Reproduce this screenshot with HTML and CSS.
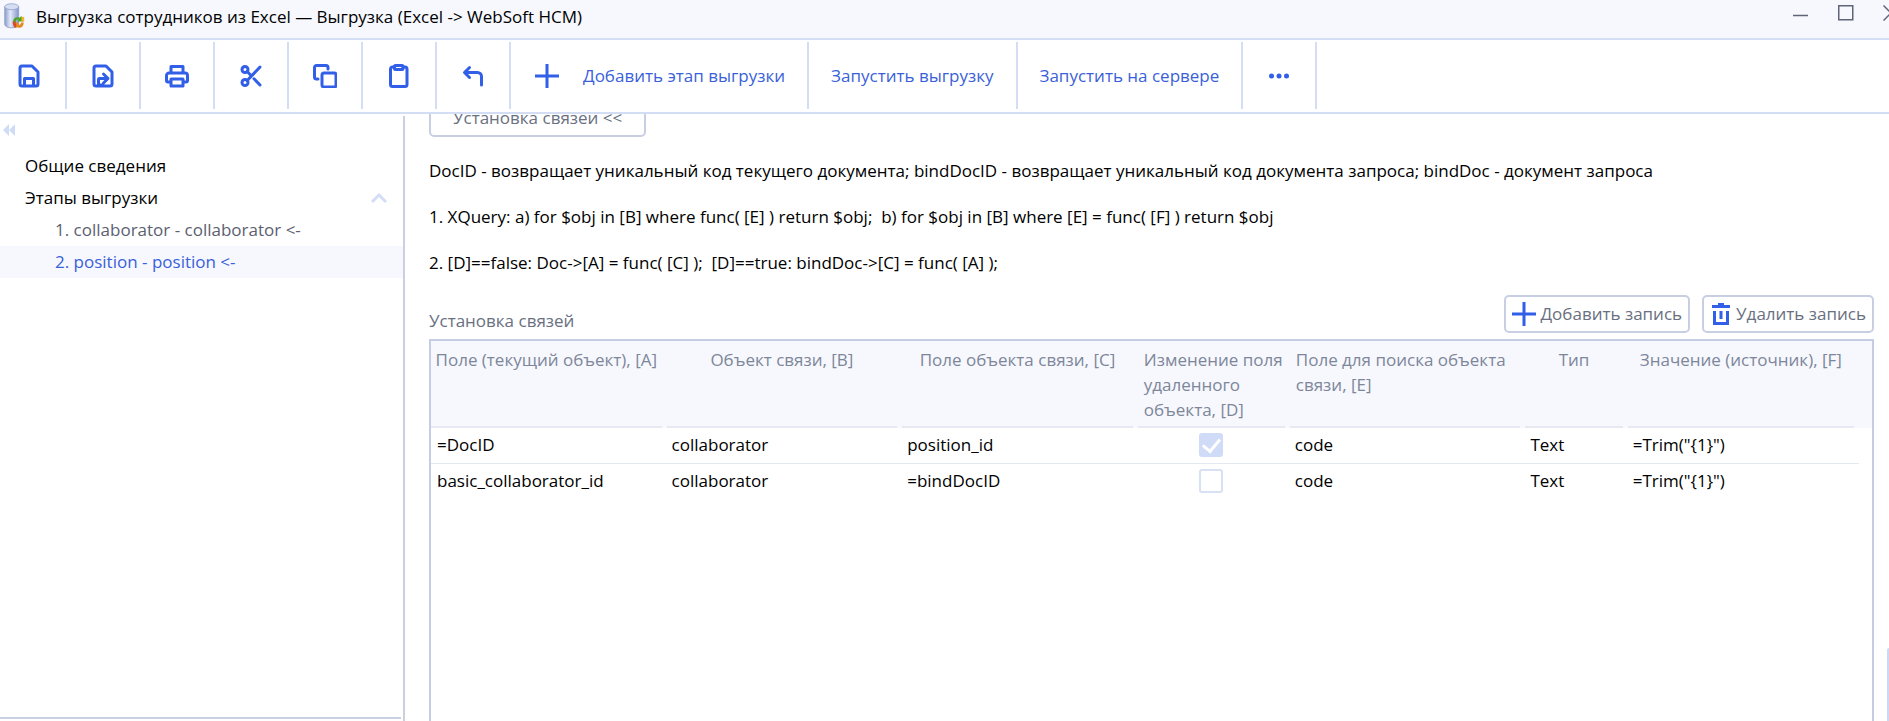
FILE: index.html
```html
<!DOCTYPE html>
<html lang="ru">
<head>
<meta charset="utf-8">
<title>Выгрузка сотрудников из Excel</title>
<link rel="stylesheet" href="styles.css">
</head>
<body>
<header class="titlebar">
  <svg class="app-icon" viewBox="0 0 22 28" aria-hidden="true">
    <defs><linearGradient id="cyl" x1="0" x2="1"><stop offset="0" stop-color="#8b9ccc"/><stop offset=".4" stop-color="#e3e9f8"/><stop offset="1" stop-color="#8495cb"/></linearGradient></defs>
    <path d="M1 4v19c0 5 15 5 15 0V4z" fill="url(#cyl)" stroke="#8997c0" stroke-width=".8"/>
    <ellipse cx="8.500" cy="4" rx="7.500" ry="3.200" fill="#d5def3" stroke="#8c9cc8" stroke-width=".8"/>
    <path d="M10 20c0-4 4-6 7-4l2-2 2 6h-6l1-2c-2-1-3 0-3 3z" fill="#48a51d"/>
    <path d="M21.500 21c0 5-4 7-7 5l-2 1-1-6h5l-1 2c2 1 3 0 3-2z" fill="#e58a22"/>
    <path d="M9.500 20h3l1 4-1 3c-2-1-3-4-3-7z" fill="#d74c26"/>
    <path d="M19 15h3v5h-3z" fill="#f0b52c"/>
  </svg>
  <h1 class="title">Выгрузка сотрудников из Excel — Выгрузка (Excel -&gt; WebSoft HCM)</h1>
  <div class="window-controls">
    <button type="button" class="window-button" aria-label="Свернуть"><svg viewBox="0 0 16 16"><path d="M0 10.500h15"/></svg></button>
    <button type="button" class="window-button" aria-label="Развернуть"><svg viewBox="0 0 16 16"><path d="M.75.750h14v14h-14z"/></svg></button>
    <button type="button" class="window-button" aria-label="Закрыть"><svg viewBox="0 0 16 16"><path d="M.5.500l15 15M15.500.500l-15 15"/></svg></button>
  </div>
</header>

<nav class="toolbar" aria-label="Действия">
  <button type="button" class="tool" aria-label="Сохранить"><svg viewBox="0 0 24 24"><path d="M5 2h10l6 6v12a2 2 0 0 1-2 2H5a2 2 0 0 1-2-2V4a2 2 0 0 1 2-2zM7.500 22v-7.500h9V22"/></svg></button>
  <button type="button" class="tool" aria-label="Сохранить и закрыть"><svg viewBox="0 0 24 24"><path d="M5 2h10l6 6v12a2 2 0 0 1-2 2H5a2 2 0 0 1-2-2V4a2 2 0 0 1 2-2zM7.500 21.500v-6a1 1 0 0 1 1-1H16M12.500 10l4.500 4.500-4.500 4.500M7.500 21h4"/></svg></button>
  <button type="button" class="tool" aria-label="Печать"><svg viewBox="0 0 24 24"><path d="M6 9V2.500h12V9M6 18H3a1.500 1.500 0 0 1-1.500-1.500V11.500A2.500 2.500 0 0 1 4 9h16a2.500 2.500 0 0 1 2.500 2.500v5A1.500 1.500 0 0 1 21 18h-3M6 15h12v7H6z"/></svg></button>
  <button type="button" class="tool" aria-label="Вырезать"><svg viewBox="0 0 24 24"><circle cx="6" cy="5.500" r="3"/><circle cx="6" cy="18.500" r="3"/><path d="M21 3L8.200 16.500M8.200 7.500L12 11.500M15 14.800l6 6.200"/></svg></button>
  <button type="button" class="tool" aria-label="Копировать"><svg viewBox="0 0 24 24"><rect x="9" y="9" width="14" height="14" rx="2"/><path d="M5 15H3.500a2 2 0 0 1-2-2V3.500a2 2 0 0 1 2-2H13a2 2 0 0 1 2 2V5"/></svg></button>
  <button type="button" class="tool" aria-label="Вставить"><svg viewBox="0 0 24 24"><path d="M16 3h2a2 2 0 0 1 2 2v15.500a2 2 0 0 1-2 2H5.500a2 2 0 0 1-2-2V5a2 2 0 0 1 2-2h2"/><rect x="7.500" y="1.500" width="8.500" height="4" rx="1"/></svg></button>
  <button type="button" class="tool" aria-label="Отменить"><svg viewBox="0 0 24 24"><path d="M20.500 21v-8.500a4 4 0 0 0-4-4H4M8.500 3.500l-5 5 5 5"/></svg></button>
  <button type="button" class="tool tool-text tool-add"><svg class="plus" viewBox="0 0 24 24"><path d="M12 0v24M0 12h24"/></svg><span>Добавить этап выгрузки</span></button>
  <button type="button" class="tool tool-text">Запустить выгрузку</button>
  <button type="button" class="tool tool-text">Запустить на сервере</button>
  <button type="button" class="tool" aria-label="Ещё"><svg class="dots" viewBox="0 0 24 24"><circle cx="4.500" cy="12" r="2.500"/><circle cx="12" cy="12" r="2.500"/><circle cx="19.500" cy="12" r="2.500"/></svg></button>
</nav>

<div class="workspace">
  <aside class="sidebar">
    <div class="side-body">
      <button type="button" class="collapse" aria-label="Скрыть панель"><svg viewBox="0 0 12 12"><path d="M6 0v12L0 6zM12 0v12L6 6z"/></svg></button>
      <ul class="tree">
        <li><a class="node" href="#general">Общие сведения</a></li>
        <li><a class="node" href="#stages">Этапы выгрузки<svg class="chevron" viewBox="0 0 16 10"><path d="M1 9l7-7 7 7"/></svg></a>
          <ul class="tree-sub">
            <li><a class="node node-sub" href="#stage-1">1. collaborator - collaborator &lt;-</a></li>
            <li><a class="node node-sub node-active" href="#stage-2" aria-current="page">2. position - position &lt;-</a></li>
          </ul>
        </li>
      </ul>
    </div>
  </aside>

  <main class="content">
    <button type="button" class="section-toggle">Установка связей &lt;&lt;</button>
    <p class="note">DocID - возвращает уникальный код текущего документа; bindDocID - возвращает уникальный код документа запроса; bindDoc - документ запроса</p>
    <p class="note">1. XQuery: a) for $obj in [B] where func( [E] ) return $obj;&nbsp; b) for $obj in [B] where [E] = func( [F] ) return $obj</p>
    <p class="note">2. [D]==false: Doc-&gt;[A] = func( [C] );&nbsp; [D]==true: bindDoc-&gt;[C] = func( [A] );</p>
    <div class="table-bar">
      <h2 class="table-title" id="links-title">Установка связей</h2>
      <div class="table-actions">
        <button type="button" class="action"><svg class="plus" viewBox="0 0 24 24"><path d="M12 0v24M0 12h24"/></svg>Добавить запись</button>
        <button type="button" class="action"><svg class="trash" viewBox="0 0 18 22"><path d="M6 0h6v2h6v3H0V2h6zM1 8h3v11h10V8h3v14H1zM7.500 8h3v8h-3z"/></svg>Удалить запись</button>
      </div>
    </div>
    <div class="grid-frame">
      <table class="grid" aria-labelledby="links-title">
        <colgroup><col class="c-wide"><col class="c-wide"><col class="c-wide"><col class="c-flag"><col class="c-wide"><col class="c-type"><col class="c-value"><col></colgroup>
        <thead>
          <tr>
            <th><div class="head">Поле (текущий объект), [A]</div></th>
            <th><div class="head">Объект связи, [B]</div></th>
            <th><div class="head">Поле объекта связи, [C]</div></th>
            <th><div class="head head-left">Изменение поля удаленного объекта, [D]</div></th>
            <th><div class="head head-left">Поле для поиска объекта связи, [E]</div></th>
            <th><div class="head">Тип</div></th>
            <th><div class="head">Значение (источник), [F]</div></th>
            <td></td>
          </tr>
        </thead>
        <tbody>
          <tr><td>=DocID</td><td>collaborator</td><td>position_id</td><td class="flag"><input type="checkbox" class="check" aria-label="Изменение поля удаленного объекта" checked></td><td>code</td><td>Text</td><td>=Trim("{1}")</td><td></td></tr>
          <tr><td>basic_collaborator_id</td><td>collaborator</td><td>=bindDocID</td><td class="flag"><input type="checkbox" class="check" aria-label="Изменение поля удаленного объекта"></td><td>code</td><td>Text</td><td>=Trim("{1}")</td><td></td></tr>
        </tbody>
      </table>
    </div>
    <div class="scroll-thumb"></div>
  </main>
</div>
</body>
</html>
```
FILE: styles.css
```css
* { box-sizing: border-box; }

body {
  margin: 0;
  height: 100vh;
  display: flex;
  flex-direction: column;
  overflow: hidden;
  background: #fff;
  color: #000;
  font: 17px/24px "Open Sans", "Noto Sans", sans-serif;
}

button {
  font: inherit;
  color: inherit;
  background: none;
  border: 0;
  padding: 0;
}

svg { display: block; flex: none; }

.titlebar {
  display: flex;
  align-items: flex-start;
  flex: none;
  height: 40px;
  padding: 3px 0 0 3px;
  background: #f6f8fe;
  border-bottom: 2px solid #d3ddf3;
  overflow: hidden;
}
.app-icon { width: 22px; height: 26px; }
.title {
  flex: 1;
  margin: 2px 0 0 11px;
  font-size: 17px;
  font-weight: 400;
}
.window-controls {
  display: flex;
  gap: 29px;
  padding-top: 2px;
  margin-right: -10px;
}
.window-button { width: 16px; height: 16px; }
.window-button svg { width: 16px; height: 16px; fill: none; stroke: #5f6577; stroke-width: 1.5; }

.toolbar {
  display: flex;
  flex: none;
  height: 74px;
  margin-left: -7px;
  padding: 2px 0 3px;
  border-bottom: 2px solid #d3ddf3;
  color: #3a5fd9;
}
.tool {
  display: flex;
  align-items: center;
  justify-content: center;
  width: 74px;
  border-right: 2px solid #d3ddf3;
}
.tool svg {
  width: 24px;
  height: 24px;
  fill: none;
  stroke: #325fe8;
  stroke-width: 3;
  stroke-linejoin: round;
  stroke-linecap: round;
}
.tool-text { width: auto; padding: 0 22px; }
.tool-add { padding-left: 24px; gap: 24px; }
.tool .plus, .action .plus {
  width: 24px;
  height: 24px;
  stroke: #325fe8;
  stroke-width: 3;
  stroke-linecap: butt;
}
.tool .dots { fill: #325fe8; stroke: none; }

.workspace { display: flex; flex: 1; min-height: 0; }

.sidebar {
  flex: none;
  width: 405px;
  margin-top: 2px;
  padding: 0 2px 2px 0;
  border-right: 2px solid #c8d0e2;
}
.side-body {
  height: 100%;
  padding-top: 8px;
  border-bottom: 2px solid #c8d0e2;
}
.collapse { display: block; margin-left: 3px; }
.collapse svg { width: 12px; height: 12px; fill: #d0dbf6; }
.tree { margin: 14px -2px 0 0; padding: 0; list-style: none; }
.tree-sub { margin: 0; padding: 0; list-style: none; }
.node {
  display: flex;
  align-items: center;
  justify-content: space-between;
  height: 32px;
  padding: 0 16px 0 25px;
  color: #000;
  text-decoration: none;
}
.node-sub { padding-left: 55px; color: #5b6070; }
.node-active { background: #f6f8fe; color: #3a5fd9; }
.chevron { width: 16px; height: 10px; fill: none; stroke: #d3ddf6; stroke-width: 3; }

.content {
  position: relative;
  flex: 1;
  min-width: 0;
  display: flex;
  flex-direction: column;
  padding: 0 15px 0 24px;
  overflow: hidden;
}
.section-toggle {
  flex: none;
  align-self: flex-start;
  margin-top: -15px;
  height: 38px;
  padding: 0 22px;
  border: 2px solid #c8cfe4;
  border-radius: 5px;
  color: #697080;
}
.note { margin: 22px 0 0; }
.table-bar {
  display: flex;
  justify-content: space-between;
  align-items: flex-end;
  margin-top: 20px;
  padding-bottom: 6px;
}
.table-title { margin: 0; font-size: 17px; font-weight: 400; color: #697080; }
.table-actions { display: flex; gap: 12px; }
.action {
  display: flex;
  align-items: center;
  gap: 4px;
  height: 38px;
  padding: 0 6px;
  border: 2px solid #c8cfe4;
  border-radius: 5px;
  color: #697080;
}
.trash { width: 18px; height: 22px; margin: 0 2px; fill: #325fe8; }

.grid-frame {
  flex: 1;
  border: 2px solid #c5cce4;
  border-bottom: 0;
}
.grid { width: 100%; table-layout: fixed; border-collapse: collapse; }
.c-wide { width: 16.35%; }
.c-flag { width: 10.55%; }
.c-type { width: 7.1%; }
.c-value { width: 16.05%; }
.grid thead { background: #f6f8fe; color: #7e8699; }
.grid th { padding: 0 5px 0 0; font-weight: 400; }
.head {
  min-height: 87px;
  padding: 6px 0 4px;
  border-bottom: 2px solid #e6e9f1;
  line-height: 25px;
}
.head-left { padding-left: 6px; text-align: left; }
.grid tbody td { height: 35px; padding: 0 0 0 5px; }
.grid tbody td:first-child { padding-left: 6px; }
.grid tbody tr:first-child td { border-bottom: 1px solid #e3e8f1; }
.grid tbody tr:first-child td:last-child { border-bottom: 0; }
.grid tbody .flag { padding: 0 5px 0 0; }
.check {
  appearance: none;
  display: block;
  width: 24px;
  height: 24px;
  margin: 0 auto;
  border: 2px solid #d8e0f3;
  border-radius: 3px;
  background: #fff;
}
.check:checked { display: grid; place-items: center; background: #d0dbf8; border-color: #d0dbf8; }
.check:checked::after {
  content: "";
  width: 8px;
  height: 14px;
  margin-bottom: 3px;
  border: solid #fff;
  border-width: 0 3px 3px 0;
  transform: rotate(40deg);
}
.scroll-thumb {
  position: absolute;
  right: 0;
  bottom: 0;
  width: 2px;
  height: 12%;
  border-radius: 2px 0 0 0;
  background: #ccd9f4;
}
```
